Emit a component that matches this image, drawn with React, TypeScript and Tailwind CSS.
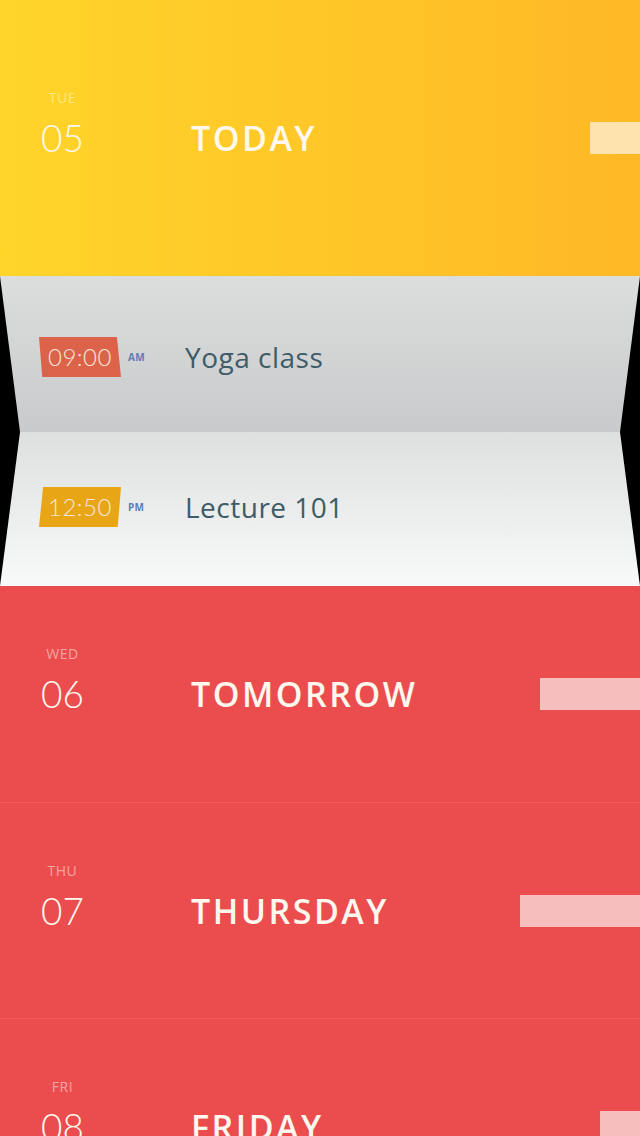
import React from 'react';

interface Day {
    short: string;
    num: string;
    title: string;
    bar: string;
}

const laterDays: Day[] = [
    { short: 'WED', num: '06', title: 'TOMORROW', bar: 'w-[100px]' },
    { short: 'THU', num: '07', title: 'THURSDAY', bar: 'w-[120px]' },
    { short: 'FRI', num: '08', title: 'FRIDAY', bar: 'w-[40px]' },
];

function DayHeader({ day, labelColor, barColor }: { day: Day; labelColor: string; barColor: string }) {
    return (
        <div className="flex items-center h-full">
            {/* date column */}
            <div className="w-[191px] pl-[41px] flex shrink-0">
                <div className="flex flex-col items-center pb-[30px]">
                    <span className={`text-[14px] leading-[16px] mb-[14px] tracking-[0.5px] ${labelColor}`}>{day.short}</span>
                    <span className="text-[37px] leading-[36px] font-light text-[#fff8ee] font-['Lato',sans-serif]">{day.num}</span>
                </div>
            </div>
            <span className="text-[34px] leading-[36px] font-semibold tracking-[2.5px] text-[#fff8ee] whitespace-nowrap">{day.title}</span>
            <div className={`ml-auto shrink-0 h-[32px] ${day.bar} ${barColor}`} />
        </div>
    );
}

function EventRow({ time, period, title, badge, clip, shift }: { time: string; period: string; title: string; badge: string; clip: string; shift: string }) {
    return (
        <div className={`flex items-center h-full ${shift}`}>
            <div className="relative ml-[39px] w-[82px] h-[40px] flex items-center justify-center shrink-0">
                <div className={`absolute inset-0 ${badge} ${clip}`} />
                <span className="relative text-[24px] font-light text-[#f6e6da] font-['Lato',sans-serif] tracking-[0.5px]">{time}</span>
            </div>
            <span className="ml-[7px] w-[57px] text-[10px] font-bold text-[#5f7db5] tracking-[0.3px]">{period}</span>
            <span className="text-[28px] text-[#3d5c68] tracking-[0.5px]">{title}</span>
        </div>
    );
}

export default function App() {
    const today: Day = { short: 'TUE', num: '05', title: 'TODAY', bar: 'w-[50px]' };

    return (
        <div className="w-[640px] h-[1136px] overflow-hidden bg-black flex flex-col font-['Open_Sans',sans-serif]">
            {/* Today */}
            <div className="h-[276px] shrink-0 bg-gradient-to-r from-[#ffd52a] to-[#ffb826]">
                <DayHeader day={today} labelColor="text-[#ffe97a]" barColor="bg-[#ffe3ac]" />
            </div>

            {/* Folded agenda */}
            <div className="h-[156px] shrink-0 bg-gradient-to-b from-[#dcdddd] to-[#c9cacb] [clip-path:polygon(0_0,100%_0,calc(100%-20px)_100%,20px_100%)]">
                <EventRow
                    time="09:00"
                    period="AM"
                    title="Yoga class"
                    badge="bg-[#dc634a]"
                    clip="[clip-path:polygon(0_0,95%_0,100%_100%,4%_100%)]"
                    shift="pt-[6px]"
                />
            </div>
            <div className="h-[154px] shrink-0 bg-gradient-to-b from-[#dedfdf] to-[#f8f9f9] [clip-path:polygon(20px_0,calc(100%-20px)_0,100%_100%,0_100%)]">
                <EventRow
                    time="12:50"
                    period="PM"
                    title="Lecture 101"
                    badge="bg-[#e8a516]"
                    clip="[clip-path:polygon(5%_0,100%_0,96%_100%,0_100%)]"
                    shift="pb-[4px]"
                />
            </div>

            {/* Upcoming days */}
            <div className="flex-1 bg-[#eb4d4e] flex flex-col">
                {laterDays.map((d, i) => (
                    <div key={d.short} className={`h-[216px] shrink-0 ${i > 0 ? 'border-t border-[#ee5a5a]' : ''}`}>
                        <DayHeader day={d} labelColor="text-[#f7a4a0]" barColor="bg-[#f7bebe]" />
                    </div>
                ))}
            </div>
        </div>
    );
}
